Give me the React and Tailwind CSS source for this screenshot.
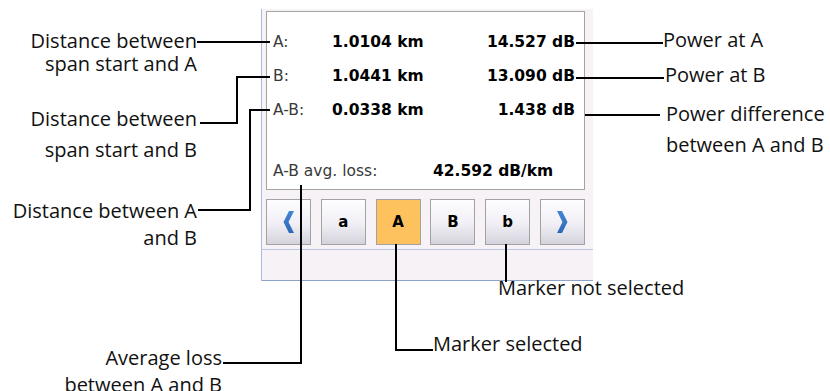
const ui = { fontFamily: '"DejaVu Sans", Verdana, sans-serif' };
const note = { fontFamily: '"Open Sans", "Noto Sans", sans-serif' };

const rows = [
  { label: "A:", dist: "1.0104 km", power: "14.527 dB" },
  { label: "B:", dist: "1.0441 km", power: "13.090 dB" },
  { label: "A-B:", dist: "0.0338 km", power: "1.438 dB" },
];

const markers = [
  { key: "a", selected: false },
  { key: "A", selected: true },
  { key: "B", selected: false },
  { key: "b", selected: false },
];

function Chevron({ flip }) {
  const id = flip ? "chevR" : "chevL";
  return (
    <svg width="11" height="22" viewBox="0 0 11 22" className={flip ? "-scale-x-100" : ""}>
      <defs>
        <linearGradient id={id} x1="0" y1="0" x2="0" y2="1">
          <stop offset="0" stopColor="#4386d6" />
          <stop offset="1" stopColor="#2d68b8" />
        </linearGradient>
      </defs>
      <path d="M6 0 H11 L5.5 11 L11 22 H6 L0.5 11 Z" fill={`url(#${id})`} />
    </svg>
  );
}

function KeyButton({ children, selected }) {
  return (
    <div
      className={
        "flex h-[46px] w-[45px] items-center justify-center border border-[#a2a2a2] text-[15px] font-bold text-black " +
        (selected
          ? "bg-[#fdc15e]"
          : "bg-[linear-gradient(180deg,#fdfcfe_0%,#f1eff5_55%,#d4d2dc_100%)]")
      }
    >
      {children}
    </div>
  );
}

// callout label; multi-line labels keep their own line spacing
function Note({ className, lines }) {
  return (
    <div className={"absolute whitespace-nowrap text-[20px] text-[#111] " + className} style={note}>
      {lines.map((l) => (
        <div key={l}>{l}</div>
      ))}
    </div>
  );
}

export default function App() {
  return (
    <div className="relative h-[391px] w-[830px] overflow-hidden bg-white">
      {/* the marker panel */}
      <div
        className="ml-[261px] mt-[9px] flex h-[272px] w-[332px] flex-col border-l border-[#a9badb] bg-[#f6f2f6]"
        style={ui}
      >
        <div className="pl-[4px] pr-[8px] pt-[2px]">
          <div className="flex h-[179px] flex-col border border-[#a4a4a4] bg-white pl-[6px] pr-[9px] pt-[14px]">
            {rows.map((r) => (
              <div key={r.label} className="flex h-[34px] items-center text-[15.5px]">
                <span className="w-[59px] text-[#3a3a3a]">{r.label}</span>
                <span className="font-bold text-black">{r.dist}</span>
                <span className="ml-auto font-bold text-black">{r.power}</span>
              </div>
            ))}
            <div className="mt-[27px] flex h-[34px] items-center text-[15.5px]">
              <span className="w-[160px] text-[#3a3a3a]">A-B avg. loss:</span>
              <span className="font-bold text-black">42.592 dB/km</span>
            </div>
          </div>

          <div className="mt-[9px] flex justify-between">
            <KeyButton>
              <Chevron />
            </KeyButton>
            {markers.map((m) => (
              <KeyButton key={m.key} selected={m.selected}>
                {m.key}
              </KeyButton>
            ))}
            <KeyButton>
              <Chevron flip />
            </KeyButton>
          </div>
        </div>
        <div className="mt-[4px] flex-1 border-b border-t border-b-[#8ea3ca] border-t-[#b9c7e2]" />
      </div>

      {/* leader lines */}
      <svg className="pointer-events-none absolute left-0 top-0" width="830" height="391">
        <g stroke="#000" strokeWidth="2" fill="none">
          <polyline points="197,42 270,42" />
          <polyline points="200,123 237,123 237,77 270,77" />
          <polyline points="198,210 250,210 250,110 270,110" />
          <polyline points="576,43 663,43" />
          <polyline points="576,78 664,78" />
          <polyline points="585,115 660,115" />
          <polyline points="223,363 301,363 301,185" />
          <polyline points="396,244 396,350 433,350" />
          <polyline points="506,244 506,282" />
        </g>
      </svg>

      {/* callouts */}
      <Note className="right-[633px] top-[29px] text-right leading-[23px]" lines={["Distance between", "span start and A"]} />
      <Note className="right-[633px] top-[103px] text-right leading-[31px]" lines={["Distance between", "span start and B"]} />
      <Note className="right-[633px] top-[197px] text-right leading-[27px]" lines={["Distance between A", "and B"]} />
      <Note className="right-[608px] top-[344px] text-right leading-[27px]" lines={["Average loss", "between A and B"]} />
      <Note className="left-[663px] top-[30px] leading-5" lines={["Power at A"]} />
      <Note className="left-[665px] top-[65px] leading-5" lines={["Power at B"]} />
      <Note className="left-[666px] top-[98px] leading-[31px]" lines={["Power difference", "between A and B"]} />
      <Note className="left-[498px] top-[278px] leading-5" lines={["Marker not selected"]} />
      <Note className="left-[433px] top-[334px] leading-5" lines={["Marker selected"]} />
    </div>
  );
}
